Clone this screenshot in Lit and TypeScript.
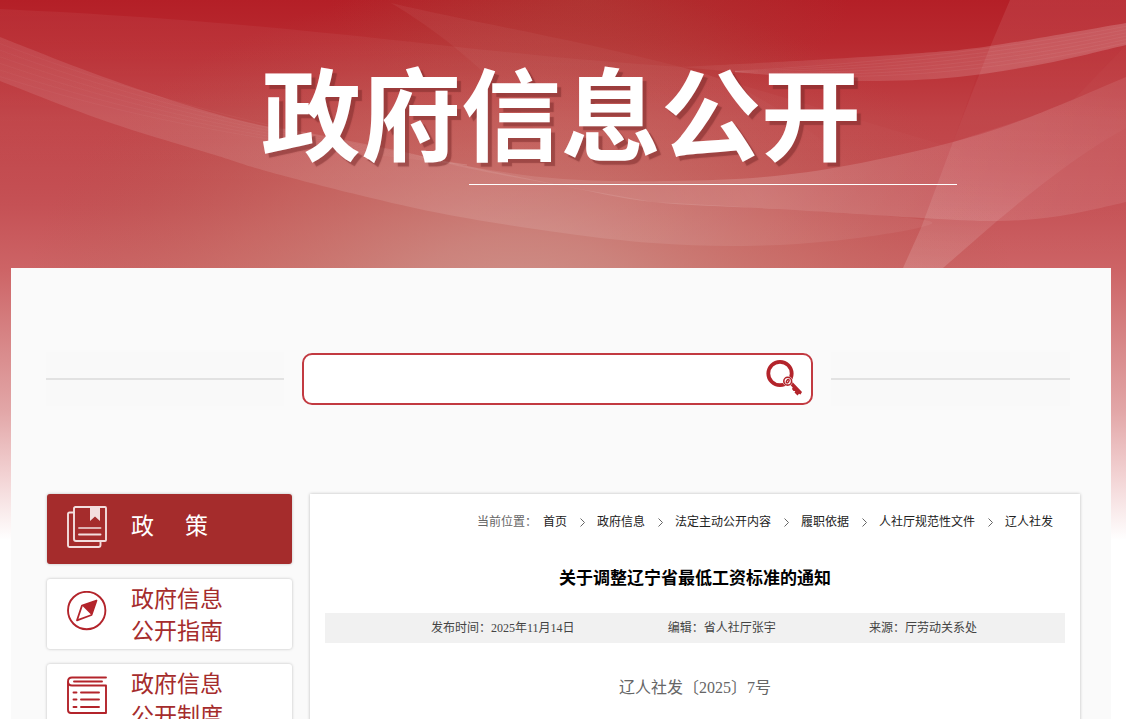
import { LitElement, html, svg, css } from "lit";
import { customElement } from "lit/decorators.js";

type Point = [number, number];

// Catmull-Rom segments through the points, without the leading move command.
const curve = (pts: Point[]): string => {
  let d = "";
  for (let i = 0; i < pts.length - 1; i++) {
    const p0 = pts[Math.max(i - 1, 0)];
    const p1 = pts[i];
    const p2 = pts[i + 1];
    const p3 = pts[Math.min(i + 2, pts.length - 1)];
    const c1 = [p1[0] + (p2[0] - p0[0]) / 6, p1[1] + (p2[1] - p0[1]) / 6];
    const c2 = [p2[0] - (p3[0] - p1[0]) / 6, p2[1] - (p3[1] - p1[1]) / 6];
    d += `C${c1} ${c2} ${p2} `;
  }
  return d;
};

// Closed shape bounded by an upper edge and a lower edge.
const ribbon = (top: Point[], bottom: Point[]): string =>
  `M${top[0]} ${curve(top)} L${bottom[0]} ${curve(bottom)} Z`;

const sweepTop: Point[] = [[0, 37], [90, 72], [180, 103], [251, 123], [309, 133], [395, 150], [467, 166], [563, 186]];
const sweepBottom: Point[] = [[918, 228], [832, 241], [743, 246], [653, 243], [563, 233], [449, 215], [359, 195], [266, 171], [215, 155], [108, 122], [0, 81]];
const upperTop: Point[] = [[681, 67], [814, 60], [922, 53], [990, 46], [1126, 23]];
const upperBottom: Point[] = [[1126, 45], [1048, 63], [958, 77], [868, 81], [796, 77], [735, 72]];
const lowerTop: Point[] = [[395, 150], [467, 166], [563, 179], [671, 181], [764, 177], [850, 165], [953, 142], [1030, 117], [1126, 77]];
const lowerBottom: Point[] = [[1126, 202], [1060, 216], [997, 221], [922, 218], [778, 209], [653, 202], [563, 186], [467, 168], [395, 150]];

const strands = [0.15, 0.3, 0.45, 0.6, 0.75, 0.9];

@customElement("page-backdrop")
export class PageBackdrop extends LitElement {
  static styles = css`
    :host { display: block; }
    .art { display: block; width: 100%; height: 540px; }
  `;
  render() {
    return html`
      <svg class="art" viewBox="0 0 1126 540" preserveAspectRatio="none" aria-hidden="true">
        <defs>
          <linearGradient id="base" x1="0" y1="0" x2="0" y2="1">
            <stop offset="0" stop-color="#b41f27" />
            <stop offset="0.08" stop-color="#b8292f" />
            <stop offset="0.22" stop-color="#c04347" />
            <stop offset="0.38" stop-color="#c55155" />
            <stop offset="0.5" stop-color="#cd6466" />
            <stop offset="0.62" stop-color="#d68384" />
            <stop offset="0.76" stop-color="#e2a6a7" />
            <stop offset="0.88" stop-color="#f2d2d3" />
            <stop offset="1" stop-color="#ffffff" />
          </linearGradient>
          <radialGradient id="glow" gradientUnits="userSpaceOnUse" cx="0" cy="0" r="1" gradientTransform="translate(520 320) scale(500 340)">
            <stop offset="0" stop-color="#d09c92" stop-opacity="0.85" />
            <stop offset="0.25" stop-color="#cc9086" stop-opacity="0.72" />
            <stop offset="0.6" stop-color="#c67c6e" stop-opacity="0.38" />
            <stop offset="1" stop-color="#b05a4c" stop-opacity="0" />
          </radialGradient>
          <radialGradient id="crest" gradientUnits="userSpaceOnUse" cx="0" cy="0" r="1" gradientTransform="translate(590 0) scale(260 110)">
            <stop offset="0" stop-color="#ac4038" stop-opacity="0.55" />
            <stop offset="1" stop-color="#ac4038" stop-opacity="0" />
          </radialGradient>
          <linearGradient id="sweep" x1="0" y1="0" x2="1" y2="0">
            <stop offset="0" stop-color="#fff" stop-opacity="0.1" />
            <stop offset="0.5" stop-color="#fff" stop-opacity="0.11" />
            <stop offset="1" stop-color="#fff" stop-opacity="0.05" />
          </linearGradient>
          <linearGradient id="ribbon" x1="0" y1="0" x2="1" y2="0">
            <stop offset="0" stop-color="#fff" stop-opacity="0.05" />
            <stop offset="0.5" stop-color="#fff" stop-opacity="0.16" />
            <stop offset="1" stop-color="#fff" stop-opacity="0.08" />
          </linearGradient>
          <linearGradient id="upper" x1="0" y1="0" x2="1" y2="0">
            <stop offset="0" stop-color="#fff" stop-opacity="0.04" />
            <stop offset="0.6" stop-color="#fff" stop-opacity="0.15" />
            <stop offset="1" stop-color="#fff" stop-opacity="0.18" />
          </linearGradient>
          <linearGradient id="veil" x1="0" y1="0" x2="0" y2="1">
            <stop offset="0" stop-color="#fff" stop-opacity="0.05" />
            <stop offset="1" stop-color="#fff" stop-opacity="0" />
          </linearGradient>
          <linearGradient id="plane" x1="0" y1="0" x2="0" y2="1">
            <stop offset="0" stop-color="#fff" stop-opacity="0.09" />
            <stop offset="0.6" stop-color="#fff" stop-opacity="0.02" />
            <stop offset="1" stop-color="#fff" stop-opacity="0" />
          </linearGradient>
          <linearGradient id="fold" x1="0" y1="1" x2="0.1" y2="0">
            <stop offset="0" stop-color="#fff" stop-opacity="0.15" />
            <stop offset="0.5" stop-color="#fff" stop-opacity="0.06" />
            <stop offset="1" stop-color="#fff" stop-opacity="0" />
          </linearGradient>
        </defs>
        <rect width="1126" height="540" fill="url(#base)" />
        <rect width="1126" height="540" fill="url(#crest)" />
        <rect width="1126" height="540" fill="url(#glow)" />
        <path d="M0 9C190 18 300 30 430 44C520 54 600 62 681 67L960 150L960 190L0 190Z" fill="url(#veil)" />
        <path d="M391 3C470 22 570 38 681 67C730 78 790 110 850 165L764 177L563 178C540 120 470 50 391 3Z" fill="url(#veil)" />
        <path d="M1010 0L990 47L953 142L921 228L903 268H1126V0Z" fill="url(#plane)" />
        <path d="M1126 45L1073 100L1030 117L953 142L977 76Z" fill="#b41f27" fill-opacity="0.08" />
        <path d=${ribbon(sweepTop, [[653, 202], [778, 209], [918, 219], ...sweepBottom])} fill="url(#sweep)" />
        <path d=${ribbon(upperTop, upperBottom)} fill="url(#upper)" />
        <path d=${ribbon(lowerTop, lowerBottom)} fill="url(#ribbon)" />
        <path d="M1126 77L1030 117L953 142L921 228L903 268H943L997 221C1040 185 1085 150 1126 128Z" fill="url(#fold)" />
        ${strands.map((t) => svg`
          <path d="M0 ${37 + 44 * t}C120 ${84 + 34 * t} 250 ${124 + 20 * t} 467 165" fill="none" stroke="#fff" stroke-opacity="0.03" />
          <path d="M735 ${71 + t}C860 ${60 + 26 * t} 990 ${48 + 28 * t} 1126 ${23 + 22 * t}" fill="none" stroke="#fff" stroke-opacity="0.05" />
        `)}
      </svg>`;
  }
}

const booksIcon = svg`
  <svg class="icon" viewBox="0 0 40 42" aria-hidden="true">
    <g fill="none" stroke="#f3dede" stroke-width="1.9" stroke-linejoin="round" stroke-linecap="round">
      <path d="M7 6.500H2.500Q1 6.500 1 8V39.500Q1 41 2.500 41H31.500Q33.500 41 33.500 39V35.500" />
      <path d="M8.500 1H38Q39 1 39 2V34Q39 35 38 35H9Q7 35 7 33V2.500Q7 1 8.500 1Z" />
      <path d="M12 22H33.500" stroke-opacity="0.75" />
      <path d="M12 28.500H33.500" />
    </g>
    <path d="M23 1H33V15L28 10.500L23 15Z" fill="#f3dede" />
  </svg>`;

const compassIcon = svg`
  <svg class="icon" viewBox="0 0 40 42" aria-hidden="true">
    <circle cx="19.700" cy="19.500" r="18.700" fill="none" stroke="#b3242b" stroke-width="1.900" />
    <path d="M29.500 9.500L15 14.500L10 29.300L24.500 24Z" fill="none" stroke="#b3242b" stroke-width="1.800" stroke-linejoin="round" />
    <path d="M29.500 9.500L15 14.500L24.500 24Z" fill="#b3242b" />
  </svg>`;

const scrollIcon = svg`
  <svg class="icon" viewBox="0 0 40 42" aria-hidden="true">
    <g fill="none" stroke="#b3242b" stroke-width="1.900" stroke-linecap="round" stroke-linejoin="round">
      <path d="M39 1.500H5Q1 1.500 1 5.500V34Q1 37 4 37H39V9.500H5Q1 9.500 1 5.500" />
      <path d="M7 5.500H35M6.500 16.500H9.500M14 16.500H32M6.500 23.500H9.500M14 23.500H32M6.500 31H9.500M14 31H32" />
    </g>
  </svg>`;

const searchIcon = svg`
  <svg class="key" viewBox="0 0 36 38" aria-hidden="true">
    <circle cx="14" cy="14.500" r="11.700" fill="none" stroke="#b3242b" stroke-width="3.800" />
    <path d="M22.500 24L25.500 22L36 33L34.500 35.500L33 34.700L31.500 36.500L28.500 33.500L29.300 32L27.500 32L26 30L26.700 28.500Z" fill="#b3242b" />
    <circle cx="21.700" cy="22.200" r="5" fill="#fff" />
    <circle cx="21.700" cy="22.200" r="3.900" fill="#fff" stroke="#b3242b" stroke-width="1.600" />
    <ellipse cx="21.700" cy="22.200" rx="1.100" ry="1.900" transform="rotate(35 21.700 22.200)" fill="#fff" stroke="#b3242b" stroke-width="1.500" />
  </svg>`;

const chevron = svg`
  <svg class="chevron" viewBox="0 0 5 9" aria-hidden="true">
    <path d="M0.500 0.500L4.500 4.500L0.500 8.500" fill="none" stroke="#666" />
  </svg>`;

@customElement("app-root")
export class AppRoot extends LitElement {
  static styles = css`
    * { box-sizing: border-box; }
    :host {
      display: grid;
      height: 100vh;
      overflow: hidden;
      background: #fff;
      font-family: "Liberation Serif", "Noto Sans CJK SC", sans-serif;
    }
    a { color: inherit; text-decoration: none; }
    .backdrop, .page { grid-area: 1 / 1; min-width: 0; }
    .page { padding: 0 15px 0 11px; isolation: isolate; }
    .banner {
      height: 268px;
      padding-top: 60px;
      display: flex;
      flex-direction: column;
      align-items: center;
    }
    .banner h1 {
      margin: 0;
      font: 700 100px/100px "Noto Sans CJK SC", sans-serif;
      color: #fff;
      white-space: nowrap;
      text-shadow: 4px 4px 1px rgba(120, 40, 40, 0.5);
    }
    .rule {
      width: 488px;
      height: 1px;
      margin-top: 24px;
      margin-left: 304px;
      background: #fff;
    }
    .content { background: #fafafa; padding: 84px 31px 0 35px; min-height: 600px; }
    .search {
      display: grid;
      grid-template-columns: 238px 1fr 239px;
      gap: 18px;
      height: 54px;
      margin-right: 10px;
      align-items: center;
    }
    .search::before, .search::after {
      content: "";
      height: 54px;
      background: linear-gradient(#e2e2e2, #e2e2e2) center / 100% 2px no-repeat #f9f9f9;
    }
    .field {
      display: flex;
      align-items: center;
      height: 52px;
      border: 2px solid #c23a41;
      border-radius: 10px;
      background: #fff;
      padding: 0 9px 0 8px;
    }
    .field input {
      flex: 1;
      min-width: 0;
      height: 40px;
      border: 0;
      outline: 0;
      background: none;
      font: 16px "Noto Sans CJK SC", sans-serif;
    }
    .field button { border: 0; padding: 0 0 2px; background: none; display: block; }
    .key { display: block; width: 36px; height: 38px; }
    .columns { display: flex; align-items: flex-start; gap: 18px; padding: 88px 0 0 1px; }
    .side { flex: 0 0 245px; display: flex; flex-direction: column; gap: 15px; }
    .tile {
      display: flex;
      height: 70px;
      padding-left: 20px;
      gap: 24px;
      border-radius: 3px;
      background: #fff;
      color: #a52c2c;
      box-shadow: 0 0 3px rgba(0, 0, 0, 0.25);
      font: 23px/32px "Noto Sans CJK SC", sans-serif;
    }
    .tile.active { background: #a52c2c; color: #fff; }
    .icon { width: 40px; height: 42px; margin-top: 12px; flex: none; }
    .label { padding-top: 2px; }
    .active .label { padding-top: 14px; }
    .article {
      flex: 1;
      min-width: 0;
      min-height: 500px;
      padding: 16px 15px;
      background: #fff;
      box-shadow: 0 0 3px rgba(0, 0, 0, 0.25);
    }
    .crumbs {
      display: flex;
      justify-content: flex-end;
      align-items: center;
      padding-right: 12px;
      font-size: 12px;
      line-height: 24px;
      color: #666;
      white-space: nowrap;
    }
    .crumbs span { margin-right: 6px; }
    .crumbs a { color: #222; }
    .chevron { width: 5px; height: 9px; margin: 0 12px 0 13px; }
    .article h2 {
      margin: 32px 0 21px;
      font-size: 17px;
      line-height: 26px;
      font-weight: 700;
      text-align: center;
      color: #000;
    }
    .meta {
      display: flex;
      justify-content: space-between;
      padding: 1px 88px 0 106px;
      background: #f1f1f1;
      color: #444;
      font-size: 12px;
      line-height: 29px;
    }
    .number {
      margin: 30px 0 0;
      text-align: center;
      font-size: 16px;
      line-height: 30px;
      color: #666;
    }
  `;

  private crumbs = ["首页", "政府信息", "法定主动公开内容", "履职依据", "人社厅规范性文件", "辽人社发"];

  render() {
    return html`
      <page-backdrop class="backdrop"></page-backdrop>
      <div class="page">
        <header class="banner">
          <h1>政府信息公开</h1>
          <div class="rule"></div>
        </header>
        <div class="content">
          <form class="search" role="search">
            <div class="field">
              <input type="text" aria-label="搜索" />
              <button type="button" aria-label="搜索">${searchIcon}</button>
            </div>
          </form>
          <div class="columns">
            <nav class="side">
              <a class="tile active" href="#">${booksIcon}<span class="label">政${"\u00a0".repeat(6)}策</span></a>
              <a class="tile" href="#">${compassIcon}<span class="label">政府信息<br />公开指南</span></a>
              <a class="tile" href="#">${scrollIcon}<span class="label">政府信息<br />公开制度</span></a>
            </nav>
            <main class="article">
              <nav class="crumbs">
                <span>当前位置：</span>
                ${this.crumbs.map((name, i) => html`${i ? chevron : ""}<a href="#">${name}</a>`)}
              </nav>
              <h2>关于调整辽宁省最低工资标准的通知</h2>
              <div class="meta">
                <span>发布时间：2025年11月14日</span>
                <span>编辑：省人社厅张宇</span>
                <span>来源：厅劳动关系处</span>
              </div>
              <p class="number">辽人社发〔2025〕7号</p>
            </main>
          </div>
        </div>
      </div>`;
  }
}
